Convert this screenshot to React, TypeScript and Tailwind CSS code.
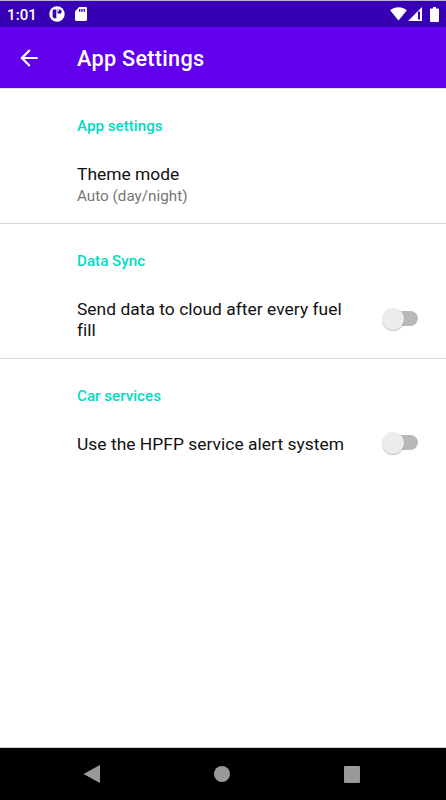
import { useState } from 'react';
import type { ReactNode } from 'react';

type CategoryProps = {
  title: string;
  children: ReactNode;
};

type SwitchItemProps = {
  label: string;
  checked: boolean;
  onChange: () => void;
};

function StatusBar() {
  return (
    <header className="h-[27px] shrink-0 border-t border-[#b9b4d3] bg-[#3700b3] flex items-center justify-between pl-[7px] pr-[7px] text-white">
      <div className="flex items-center">
        <span className="w-[42px] pt-px text-[15px] leading-[26px] font-medium tracking-[0.1px]">
          1:01
        </span>
        <svg width="16" height="16" viewBox="0 0 16 16">
          <circle cx="8" cy="8" r="7.7" fill="#fff" />
          <path
            d="M5 3.4h2.3v8.8H5.6a2 2 0 0 1-2-2V4.8A1.4 1.4 0 0 1 5 3.4Z"
            fill="#3700b3"
          />
          <path
            d="M8.2 3.4h2.3a2.2 2.2 0 0 1 0 4.4 2.3 2.3 0 0 1-2.3-2.2Z"
            fill="#3700b3"
          />
          <circle cx="9.2" cy="4.6" r="0.9" fill="#fff" />
        </svg>
        <svg className="ml-[10px]" width="12" height="14" viewBox="0 0 12 14">
          <path
            d="M4.2 0H10.6A1.4 1.4 0 0 1 12 1.4V12.6A1.4 1.4 0 0 1 10.6 14H1.4A1.4 1.4 0 0 1 0 12.6V4.2Z"
            fill="#fff"
          />
          <path
            d="M4 2h1.4v2.8H4zM6.3 2h1.4v2.8H6.3zM8.6 2H10v2.8H8.6z"
            fill="#3700b3"
          />
        </svg>
      </div>
      <div className="flex items-center">
        <svg width="17" height="14" viewBox="0 0 18 15">
          <path d="M0 3.6C5.2-.9 12.8-.9 18 3.6L9 14.5Z" fill="#fff" />
        </svg>
        <svg className="ml-[1px]" width="14" height="14" viewBox="0 0 14 14">
          <path d="M14 0v14H0Z" fill="#fff" />
          <path d="M10 4.4h2v8.2h-2Z" fill="#3700b3" />
        </svg>
        <svg className="ml-[8px]" width="9" height="15" viewBox="0 0 9 15">
          <path
            d="M3 0h3v1.5h2a1 1 0 0 1 1 1V14a1 1 0 0 1-1 1H1a1 1 0 0 1-1-1V2.5a1 1 0 0 1 1-1h2Z"
            fill="#fff"
          />
        </svg>
      </div>
    </header>
  );
}

function Toolbar() {
  return (
    <div className="h-[61px] shrink-0 bg-[#6200ee] flex items-center pl-[16px] text-white">
      <button aria-label="Back" className="mr-[35px]">
        <svg width="26" height="26" viewBox="0 0 24 24" fill="#fff">
          <path d="M20 11H7.83l5.59-5.59L12 4l-8 8 8 8 1.41-1.41L7.83 13H20v-2z" />
        </svg>
      </button>
      <h1 className="text-[21.7px] leading-[28px] font-medium tracking-[0.27px] pt-[3px]">
        App Settings
      </h1>
    </div>
  );
}

function Category({ title, children }: CategoryProps) {
  return (
    <section className="h-[135px] pl-[77px] border-b border-[#d9d9d9] last:border-b-0">
      <h2 className="pt-[27px] text-[15.2px] leading-[20px] font-medium text-[#03dac5]">
        {title}
      </h2>
      {children}
    </section>
  );
}

function SwitchItem({ label, checked, onChange }: SwitchItemProps) {
  return (
    <div className="pt-[28px] pr-[28px] flex items-center justify-between">
      <span className="w-[276px] text-[17.4px] leading-[20.5px] tracking-[0.03px] text-[#111]">
        {label}
      </span>
      <button
        role="switch"
        aria-checked={checked}
        aria-label={label}
        onClick={onChange}
        className="relative w-[36px] h-[17px] mb-[3px] flex items-center justify-end"
      >
        <span className="w-[32px] h-[15px] rounded-full bg-[#b9b9b9]" />
        <span
          className={
            checked
              ? 'absolute right-0 -top-[2px] size-[22px] rounded-full bg-[#03dac5] shadow-[0_1px_1px_rgba(0,0,0,0.25)]'
              : 'absolute left-0 -top-[2px] size-[22px] rounded-full bg-[#ececec] shadow-[0_1px_1px_rgba(0,0,0,0.25)]'
          }
        />
      </button>
    </div>
  );
}

function NavigationBar() {
  return (
    <nav className="h-[53px] shrink-0 border-t border-[#d0d0d0] bg-black flex items-center justify-between pl-[84px] pr-[86px]">
      <svg width="16" height="18" viewBox="0 0 16 18">
        <path
          d="M15 .5a.7.7 0 0 1 1 .6v15.8a.7.7 0 0 1-1 .6L.4 9.6a.7.7 0 0 1 0-1.2Z"
          fill="#999"
        />
      </svg>
      <span className="size-[16px] rounded-full bg-[#999]" />
      <span className="w-[16px] h-[17px] rounded-[1px] bg-[#999]" />
    </nav>
  );
}

export default function App() {
  const [settings, setSettings] = useState({
    cloudSync: false,
    serviceAlert: false
  });

  return (
    <main className="w-full h-screen flex flex-col bg-white font-['Roboto',sans-serif]">
      <StatusBar />
      <Toolbar />
      <div className="flex-1 min-h-0 border-t border-[#e4dcf0]">
        <Category title="App settings">
          <div className="pt-[27px]">
            <p className="text-[17.4px] leading-[22px] text-[#111]">
              Theme mode
            </p>
            <p className="text-[15.2px] leading-[22px] tracking-[0.03px] text-[#757575]">
              Auto (day/night)
            </p>
          </div>
        </Category>
        <Category title="Data Sync">
          <SwitchItem
            label="Send data to cloud after every fuel fill"
            checked={settings.cloudSync}
            onChange={() =>
              setSettings({ ...settings, cloudSync: !settings.cloudSync })
            }
          />
        </Category>
        <Category title="Car services">
          <SwitchItem
            label="Use the HPFP service alert system"
            checked={settings.serviceAlert}
            onChange={() =>
              setSettings({ ...settings, serviceAlert: !settings.serviceAlert })
            }
          />
        </Category>
      </div>
      <NavigationBar />
    </main>
  );
}
